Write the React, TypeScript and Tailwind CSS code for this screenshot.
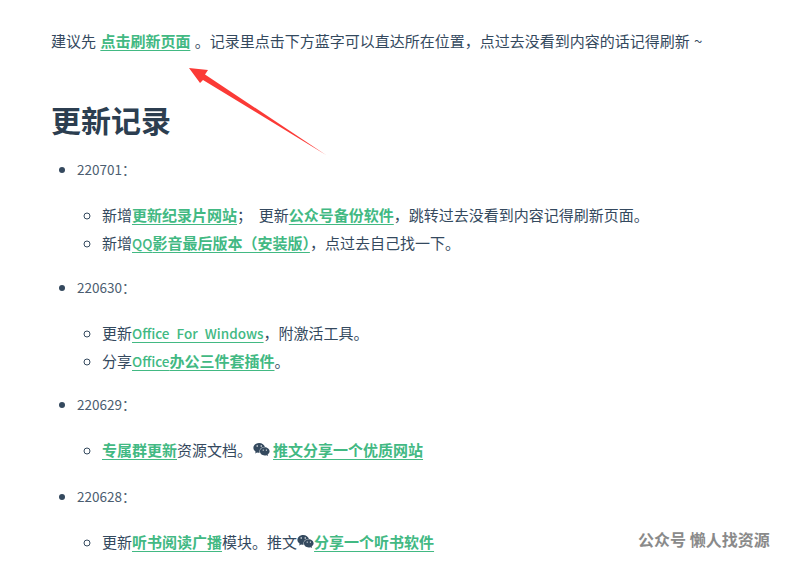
import { FaWeixin } from "react-icons/fa";

const font = { fontFamily: '"Noto Sans CJK SC", "Noto Sans", sans-serif' };

function Link({ children }: { children: React.ReactNode }) {
  return <a className="font-semibold text-[#42b983] underline underline-offset-[3px]">{children}</a>;
}

function Latin({ children }: { children: React.ReactNode }) {
  return <span className="text-[13.5px] font-medium [word-spacing:4px]">{children}</span>;
}

function Group({ date, className, children }: { date: string; className: string; children: React.ReactNode }) {
  return (
    <li className={className}>
      <p className="text-[13.5px] leading-[26px] text-[#4b5d70]">{date}&#xFF1A;</p>
      <ul className="mt-[19px] list-[circle] pl-[25px] marker:text-[#5a6b7c]">{children}</ul>
    </li>
  );
}

function Row({ children }: { children: React.ReactNode }) {
  return <li className="h-[28px] leading-[28px]">{children}</li>;
}

export default function App() {
  return (
    <div className="relative h-[567px] w-[790px] overflow-hidden bg-white pl-[51px] pt-[27px] text-[15px] text-[#34495e]" style={font}>
      <p className="leading-[28px] [word-spacing:1px]">
        建议先 <Link>点击刷新页面</Link> 。记录里点击下方蓝字可以直达所在位置&#xFF0C;点过去没看到内容的话记得刷新 ~
      </p>

      <h2 className="mt-[40px] text-[30px] font-bold leading-[48px] text-[#2c3e50]">更新记录</h2>

      <ul className="mt-[13px] list-disc pl-[26px] marker:text-[#34495e]">
        <Group date="220701" className="h-[118px]">
          <Row>
            新增<Link>更新纪录片网站</Link>&#xFF1B;&nbsp;&nbsp;更新<Link>公众号备份软件</Link>&#xFF0C;跳转过去没看到内容记得刷新页面。
          </Row>
          <Row>
            新增<Link><Latin>QQ</Latin>影音最后版本&#xFF08;安装版&#xFF09;</Link>&#xFF0C;点过去自己找一下。
          </Row>
        </Group>
        <Group date="220630" className="h-[117px]">
          <Row>
            更新<Link><Latin>Office For Windows</Latin></Link>&#xFF0C;附激活工具。
          </Row>
          <Row>
            分享<Link><Latin>Office</Latin>办公三件套插件</Link>。
          </Row>
        </Group>
        <Group date="220629" className="h-[92px]">
          <Row>
            <Link>专属群更新</Link>资源文档。
            <FaWeixin className="ml-[1px] mr-[3px] inline-block size-[17px] align-[-2px]" />
            <Link>推文分享一个优质网站</Link>
          </Row>
        </Group>
        <Group date="220628" className="h-[72px]">
          <Row>
            更新<Link>听书阅读广播</Link>模块。推文
            <FaWeixin className="inline-block size-[17px] align-[-2px]" />
            <Link>分享一个听书软件</Link>
          </Row>
        </Group>
      </ul>

      {/* annotation arrow */}
      <svg className="absolute left-0 top-0" width="790" height="567" viewBox="0 0 790 567">
        <path d="M189 68 L208 70 L205 74.5 L326 155 L203 80 L200 83 Z" fill="#fb3a36" />
      </svg>

      {/* watermark */}
      <div className="absolute left-[638px] top-[528px] whitespace-nowrap text-[16px] font-bold leading-[22px] text-[#8a8a8a]">
        公众号 懒人找资源
      </div>
    </div>
  );
}
